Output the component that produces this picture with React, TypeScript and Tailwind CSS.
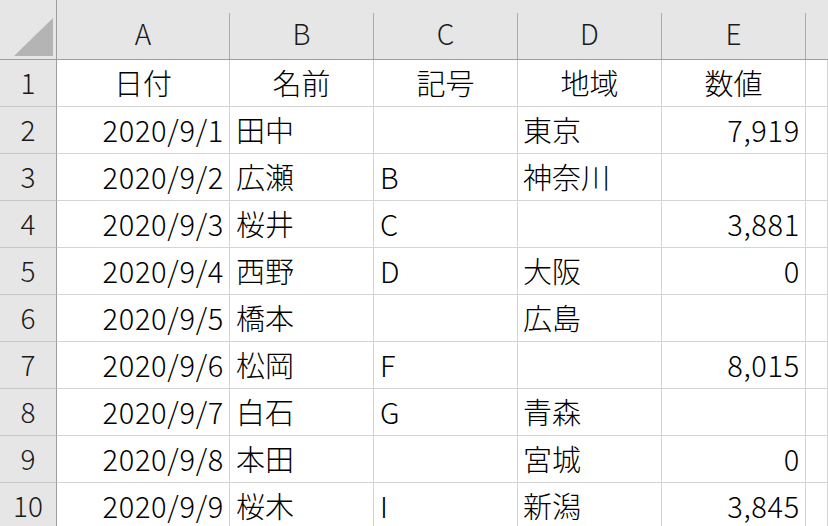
const FONT = "font-['Noto_Sans_CJK_JP','Noto_Sans',sans-serif]"

const COLS = ['A', 'B', 'C', 'D', 'E']

const ROWS: [string, string, string, string, string][] = [
  ['2020/9/1', '田中', '', '東京', '7,919'],
  ['2020/9/2', '広瀬', 'B', '神奈川', ''],
  ['2020/9/3', '桜井', 'C', '', '3,881'],
  ['2020/9/4', '西野', 'D', '大阪', '0'],
  ['2020/9/5', '橋本', '', '広島', ''],
  ['2020/9/6', '松岡', 'F', '', '8,015'],
  ['2020/9/7', '白石', 'G', '青森', ''],
  ['2020/9/8', '本田', '', '宮城', '0'],
  ['2020/9/9', '桜木', 'I', '新潟', '3,845'],
]

const HEADINGS = ['日付', '名前', '記号', '地域', '数値']

const CELL =
  'flex items-center border-r border-b border-[#d4d4d4] bg-white pb-[2px] text-[29px] font-light text-black leading-none'

function ColHeader({ label }: { label: string }) {
  return (
    <div className="flex border-b border-[#9e9e9e] bg-[#e6e6e6]">
      <div className="flex flex-1 items-center justify-center pt-[7px] text-[28px] font-light leading-none text-[#1a1a1a]">
        {label}
      </div>
      <div className="h-[46px] w-px self-end bg-[#ababab]" />
    </div>
  )
}

function RowHeader({ n }: { n: number }) {
  return (
    <div className="flex items-center justify-center border-r border-b border-r-[#9e9e9e] border-b-[#c6c6c6] bg-[#e6e6e6] pb-[2px] text-[28px] font-light leading-none text-[#1a1a1a]">
      {n}
    </div>
  )
}

function Row({ n, data }: { n: number; data: [string, string, string, string, string] }) {
  const [date, name, code, area, value] = data
  return (
    <>
      <RowHeader n={n} />
      <div className={`${CELL} justify-end pr-[5px] tracking-[0.7px]`}>{date}</div>
      <div className={`${CELL} pl-[6px]`}>{name}</div>
      <div className={`${CELL} pl-[6px]`}>{code}</div>
      <div className={`${CELL} pl-[5px]`}>{area}</div>
      <div className={`${CELL} justify-end pr-[5px] tracking-[0.7px]`}>{value}</div>
      <div className={CELL} />
    </>
  )
}

export default function App() {
  return (
    <div
      className={`grid h-[526px] w-[828px] overflow-hidden bg-white ${FONT} grid-cols-[57px_173px_144px_144px_144px_144px_1fr] grid-rows-[60px_repeat(10,47px)]`}
    >
      {/* corner */}
      <div className="flex items-end justify-end border-r border-b border-[#9e9e9e] bg-[#e6e6e6] pr-[3px] pb-[3px]">
        <svg width="39" height="38" viewBox="0 0 39 38">
          <polygon points="0,38 39,0 39,38" fill="#b4b4b4" />
        </svg>
      </div>
      {COLS.map((c) => (
        <ColHeader key={c} label={c} />
      ))}
      <div className="border-b border-[#9e9e9e] bg-[#e6e6e6]" />

      {/* row 1 */}
      <RowHeader n={1} />
      {HEADINGS.map((h) => (
        <div key={h} className={`${CELL} justify-center`}>
          {h}
        </div>
      ))}
      <div className={CELL} />

      {ROWS.map((r, i) => (
        <Row key={i} n={i + 2} data={r} />
      ))}
    </div>
  )
}
